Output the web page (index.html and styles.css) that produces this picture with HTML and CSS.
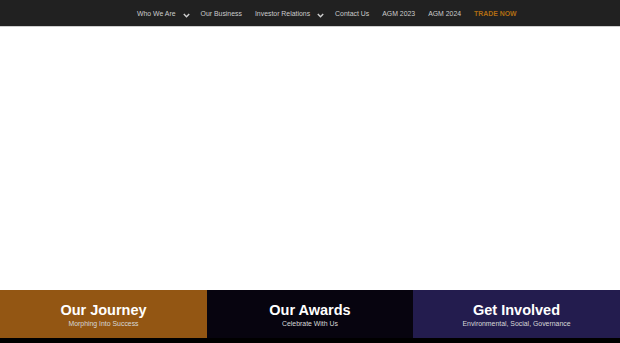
FILE: index.html
```html
<!DOCTYPE html>
<html lang="en">
<head>
  <meta charset="UTF-8">
  <title>Home</title>
  <link rel="stylesheet" href="styles.css">
</head>
<body>

  <div class="navbar">
    <a href="#">Who We Are</a>
    <span class="chev"><svg width="7" height="5" viewBox="0 0 7 5"><polyline points="0.8,1 3.5,3.8 6.2,1" fill="none" stroke="#d0d0d0" stroke-width="1.4"/></svg></span>
    <a href="#">Our Business</a>
    <a href="#">Investor Relations</a>
    <span class="chev"><svg width="7" height="5" viewBox="0 0 7 5"><polyline points="0.8,1 3.5,3.8 6.2,1" fill="none" stroke="#d0d0d0" stroke-width="1.4"/></svg></span>
    <a href="#">Contact Us</a>
    <a href="#">AGM 2023</a>
    <a href="#">AGM 2024</a>
    <a href="#" class="trade">TRADE NOW</a>
  </div>

  <div class="hero"></div>

  <div class="tiles">
    <a href="#" class="tile journey">
      <h3>Our Journey</h3>
      <p>Morphing Into Success</p>
    </a>
    <a href="#" class="tile awards">
      <h3>Our Awards</h3>
      <p>Celebrate With Us</p>
    </a>
    <a href="#" class="tile involved">
      <h3>Get Involved</h3>
      <p>Environmental, Social, Governance</p>
    </a>
  </div>

  <div class="bottom"></div>

</body>
</html>
```

FILE: styles.css
```css
body {
  margin: 0;
  padding: 0;
  background-color: #fff;
  font-family: "Liberation Sans", Arial, sans-serif;
}

.navbar {
  background-color: #212121;
  height: 26px;
  border-bottom: 1px solid #cfcfcf;
  display: flex;
  align-items: center;
  padding-left: 137px;
  gap: 13px;
}

.navbar a {
  color: #cccccc;
  text-decoration: none;
  font-size: 6.9px;
  line-height: 26px;
  padding-top: 2px;
}

.navbar .chev {
  display: flex;
  margin-left: -6px;
  margin-right: -2px;
  padding-top: 4px;
}

.navbar .trade {
  color: #b06c12;
  font-weight: bold;
}

.hero {
  height: 263px;
}

.tiles {
  display: grid;
  grid-template-columns: 207px 206px 207px;
}

.tile {
  height: 48px;
  box-sizing: border-box;
  padding-top: 12px;
  text-align: center;
  color: #fff;
  text-decoration: none;
}

.tile h3 {
  margin: 0;
  font-size: 14.5px;
  line-height: 17px;
  font-weight: bold;
}

.tile p {
  margin: 0;
  font-size: 6.9px;
  line-height: 9px;
  color: #d8d8d8;
}

.journey {
  background-color: #935613;
}

.awards {
  background-color: #07040f;
}

.involved {
  background-color: #231c4e;
}

.bottom {
  height: 5px;
  background-color: #000;
}
```
